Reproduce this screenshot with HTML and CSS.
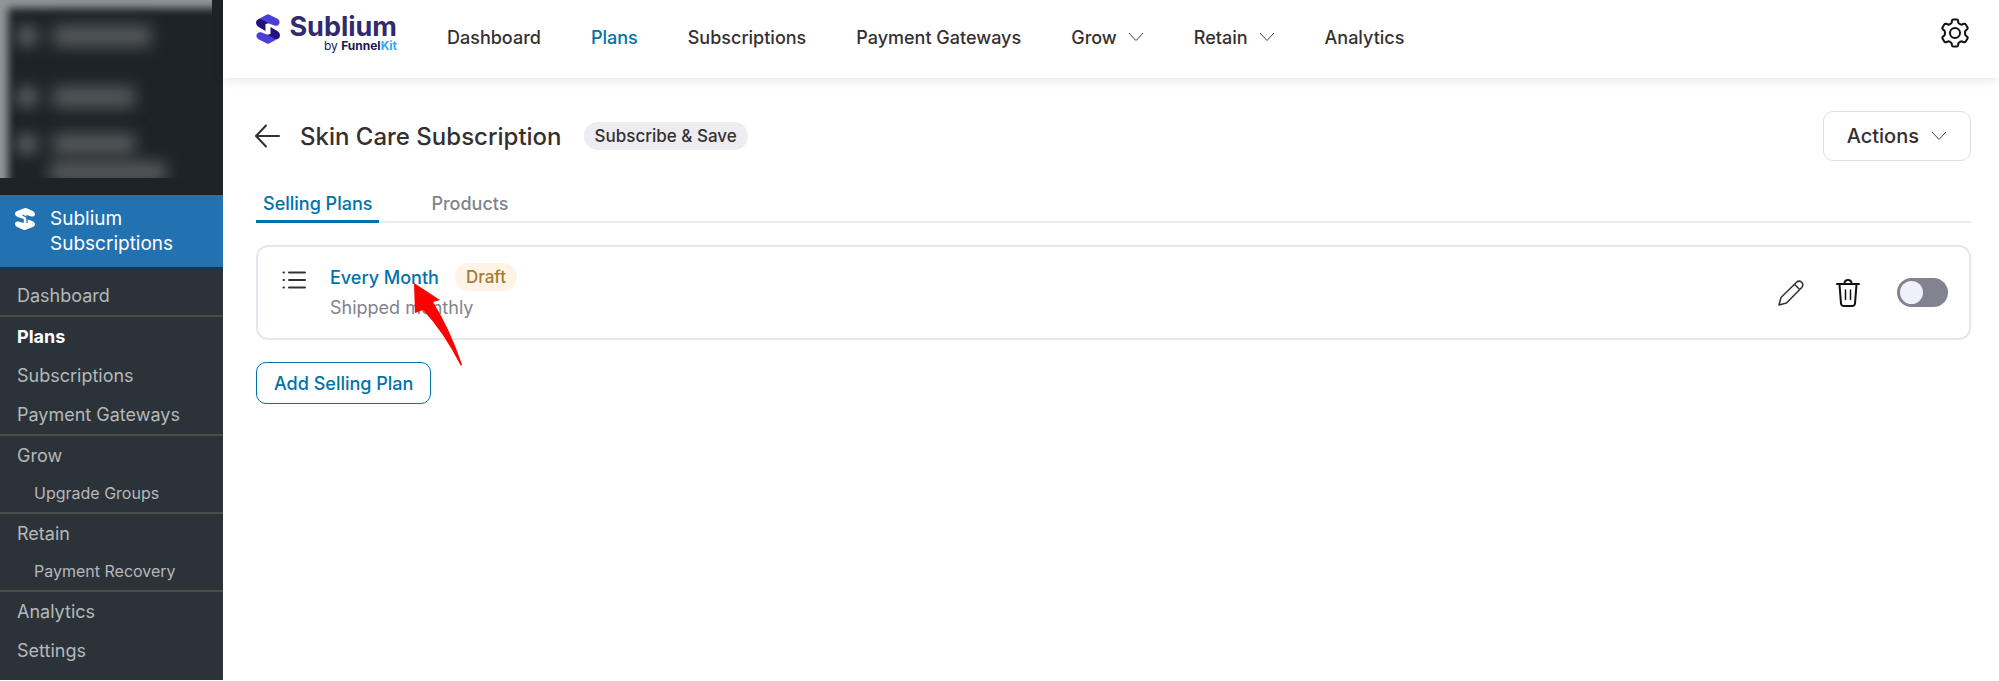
FILE: index.html
```html
<!DOCTYPE html>
<html lang="en">
<head>
    <meta charset="UTF-8">
    <meta name="viewport" content="width=device-width, initial-scale=1.0">
    <title>Sublium Subscriptions</title>
    <link rel="stylesheet" href="styles.css">
</head>
<body>
    <div class="layout">
        <!-- Admin sidebar -->
        <aside class="sidebar">
            <div class="masked" aria-hidden="true">
                <div class="masked-row"><span class="masked-icon"></span><span class="masked-text"></span></div>
                <div class="masked-row near"><span class="masked-icon"></span><span class="masked-text short"></span></div>
                <div class="masked-row tight"><span class="masked-icon"></span><span class="masked-text short"></span></div>
                <div class="masked-row indent"><span class="masked-text wide"></span></div>
            </div>
            <a href="#" class="plugin-link">
                <svg class="plugin-icon" width="20" height="22" viewBox="0 0 24 30" preserveAspectRatio="none">
                    <path fill="#fff" d="M11 .4Q12.500-.3 14 .4L22 4.500Q24 6 24 9Q23.500 12.500 20 11.500L13.500 9.500V16L4 12.500Q0 11 0 7.500Q0 5.500 2 4.500Z"/>
                    <path fill="#fff" d="M13 29.600Q11.500 30.300 10 29.600L2 25.500Q0 24 0 21Q.500 17.500 4 18.500L10.500 20.500V14L20 17.500Q24 19 24 22.500Q24 24.500 22 25.500Z"/>
                    <path d="M9 9.500L14.500 13V20.500" fill="none" stroke="#2271b1" stroke-width="1.500"/>
                </svg>
                <span>Sublium<br>Subscriptions</span>
            </a>
            <nav class="submenu">
                <a href="#">Dashboard</a>
                <a href="#" class="divided current">Plans</a>
                <a href="#">Subscriptions</a>
                <a href="#">Payment Gateways</a>
                <a href="#" class="divided">Grow</a>
                <a href="#" class="child">Upgrade Groups</a>
                <a href="#" class="divided">Retain</a>
                <a href="#" class="child">Payment Recovery</a>
                <a href="#" class="divided">Analytics</a>
                <a href="#">Settings</a>
            </nav>
        </aside>

        <div class="content">
            <header class="topbar">
                <a href="#" class="logo">
                    <svg width="24" height="30" viewBox="0 0 24 30">
                        <path fill="#24107f" d="M2.500 5Q5 4 8 6L14 9L9.500 10V17L3.500 13.500Q0 11.500 0 8.500Q0 6 2.500 5Z"/>
                        <path fill="#4a3fd6" d="M11 .4Q12 0 13 .4L22 5Q24 6.500 23.500 9Q22.500 12.300 19 11.800L13 9.500L5 5Q3.500 4.300 2.500 5Z"/>
                        <path fill="#24107f" d="M21.500 25Q19 26 16 24L10 21L14.500 20V13L20.500 16.500Q24 18.500 24 21.500Q24 24 21.500 25Z"/>
                        <path fill="#4a3fd6" d="M13 29.600Q12 30 11 29.600L2 25Q0 23.500 .500 21Q1.500 17.700 5 18.200L11 20.500L19 25Q20.500 25.700 21.500 25Z"/>
                    </svg>
                    <span class="logo-text">
                        <strong>Sublium</strong>
                        <small>by <b>Funnel<i>Kit</i></b></small>
                    </span>
                </a>
                <nav class="main-nav">
                    <a href="#">Dashboard</a>
                    <a href="#" class="active">Plans</a>
                    <a href="#">Subscriptions</a>
                    <a href="#">Payment Gateways</a>
                    <a href="#">Grow <svg class="chevron" width="16" height="10" viewBox="0 0 16 10"><path d="M1 1L8 8.500L15 1"/></svg></a>
                    <a href="#">Retain <svg class="chevron" width="16" height="10" viewBox="0 0 16 10"><path d="M1 1L8 8.500L15 1"/></svg></a>
                    <a href="#">Analytics</a>
                </nav>
                <button class="icon-button settings" aria-label="Settings">
                    <svg width="28" height="30" viewBox="0 0 28 30" fill="none" stroke="#111" stroke-width="2" stroke-linejoin="round">
                        <path d="M11 2.500Q11.200 1.500 12.200 1.500H15.800Q16.800 1.500 17 2.500L17.300 4.500Q17.500 5.300 18.300 5.700L19.500 6.400Q20.200 6.800 21 6.500L23 5.800Q24 5.500 24.600 6.300L26.500 9.600Q27 10.500 26.200 11.200L24.700 12.500Q24.100 13.100 24.100 14V16Q24.100 16.900 24.700 17.500L26.200 18.800Q27 19.500 26.500 20.400L24.600 23.700Q24 24.500 23 24.200L21 23.500Q20.200 23.200 19.500 23.600L18.300 24.300Q17.500 24.700 17.300 25.500L17 27.500Q16.800 28.500 15.800 28.500H12.200Q11.200 28.500 11 27.500L10.700 25.500Q10.500 24.700 9.700 24.300L8.500 23.600Q7.800 23.200 7 23.500L5 24.200Q4 24.500 3.400 23.700L1.500 20.400Q1 19.500 1.800 18.800L3.300 17.500Q3.900 16.900 3.900 16V14Q3.900 13.100 3.300 12.500L1.800 11.200Q1 10.500 1.500 9.600L3.400 6.300Q4 5.500 5 5.800L7 6.500Q7.800 6.800 8.500 6.400L9.700 5.700Q10.500 5.300 10.700 4.500Z"/>
                        <circle cx="14" cy="15" r="5"/>
                    </svg>
                </button>
            </header>

            <main>
                <div class="page-head">
                    <a href="#" class="back" aria-label="Back">
                        <svg width="25" height="24" viewBox="0 0 25 24" fill="none" stroke="#353030" stroke-width="2" stroke-linecap="round" stroke-linejoin="round">
                            <path d="M24 12H1M11 1.500L1 12L11 22.500"/>
                        </svg>
                    </a>
                    <h1>Skin Care Subscription</h1>
                    <span class="badge type">Subscribe &amp; Save</span>
                    <button class="actions">Actions <svg class="chevron" width="16" height="10" viewBox="0 0 16 10"><path d="M1 1L8 8.500L15 1"/></svg></button>
                </div>

                <div class="tabs">
                    <a href="#" class="active">Selling Plans</a>
                    <a href="#">Products</a>
                </div>

                <!-- Selling plan row -->
                <section class="plan">
                    <svg class="handle" width="24" height="18" viewBox="0 0 24 18" stroke="#353030" stroke-width="2" stroke-linecap="round">
                        <path d="M7 1.500H23M7 9H23M7 16.500H23M1.500 1.500H2M1.500 9H2M1.500 16.500H2"/>
                    </svg>
                    <div class="plan-info">
                        <div class="plan-title">
                            <a href="#">Every Month</a>
                            <span class="badge draft">Draft</span>
                        </div>
                        <p>Shipped monthly</p>
                        <svg class="pointer" width="52" height="84" viewBox="0 0 52 84">
                            <path fill="#f00" d="M1 0L27 17L20 19Q36 44 49 81.500L48 83Q30 48 10 27L2 30Z"/>
                        </svg>
                    </div>
                    <div class="plan-actions">
                        <button class="icon-button" aria-label="Edit">
                            <svg width="26" height="26" viewBox="0 0 26 26" fill="none" stroke="#353030" stroke-width="1.500" stroke-linejoin="round">
                                <path d="M1 25L3 17.500L18.500 2.300Q21 0 23.700 2.300Q26 5 23.700 7.500L8.500 23ZM16.500 4.300L21.700 9.500"/>
                            </svg>
                        </button>
                        <button class="icon-button" aria-label="Delete">
                            <svg width="24" height="30" viewBox="0 0 24 30" fill="none" stroke="#111" stroke-width="2" stroke-linejoin="round" stroke-linecap="round">
                                <path d="M1 6H23M8.500 5.500Q8.500 2 12 2T15.500 5.500M3.500 6.500L5 25.500Q5.300 28 8 28H16Q18.700 28 19 25.500L20.500 6.500"/>
                                <path stroke-width="1.500" d="M9.500 12V21.500M14.500 12V21.500"/>
                            </svg>
                        </button>
                        <input type="checkbox" class="switch" aria-label="Enable Every Month">
                    </div>
                </section>

                <button class="add-plan">Add Selling Plan</button>
            </main>
        </div>
    </div>
</body>
</html>
```

FILE: styles.css
```css
* { box-sizing: border-box; }
body { margin: 0; font-family: Inter, "Liberation Sans", sans-serif; font-size: 18px; color: #353030; background: #fff; }
a { color: inherit; text-decoration: none; }
button { font-family: inherit; color: inherit; background: #fff; cursor: pointer; }
svg { display: block; flex: none; }

.layout { display: flex; align-items: flex-start; }

/* Sidebar */
.sidebar { width: 223px; flex: none; background: #1d2327; }
.masked { height: 178px; margin: 0 11px 17px 0; padding-top: 26px; overflow: hidden; box-shadow: inset 8px 8px 8px #94999c; }
.masked-row { display: flex; gap: 16px; height: 61px; padding-left: 17px; filter: blur(8px); }
.masked-row.near { height: 47px; }
.masked-row.tight { height: 28px; }
.masked-row.indent { padding-left: 50px; }
.masked-icon { width: 20px; height: 20px; border-radius: 10px; background: #667075; }
.masked-text { width: 98px; height: 20px; background: #585c5f; }
.masked-text.short { width: 82px; }
.masked-text.wide { width: 116px; }
.plugin-link { display: flex; gap: 15px; padding: 11px 15px; background: #2271b1; color: #fff; font-size: 19px; line-height: 25px; }
.plugin-icon { margin-top: 2px; }
.submenu { padding: 9px 0 10px; background: #2c3338; color: #b4b8bb; }
.submenu a { display: block; padding-left: 17px; line-height: 39px; }
.submenu .divided { border-top: 2px solid #484d51; }
.submenu .current { color: #fff; font-weight: 700; }
.submenu .child { padding-left: 34px; font-size: 16px; line-height: 37px; }

/* Top bar */
.content { flex: 1; min-width: 0; }
.topbar { display: flex; align-items: center; height: 78px; padding: 0 30px 4px 33px; box-shadow: 0 1px 12px rgba(0, 0, 0, 0.12); }
.logo { display: flex; gap: 8px; margin-top: -8px; }
.logo-text { display: flex; flex-direction: column; align-items: flex-end; width: 109px; }
.logo strong { font-size: 27px; line-height: 26px; color: #312b6b; }
.logo small { font-size: 12px; line-height: 12px; color: #1c1850; }
.logo i { font-style: normal; color: #35a5f5; }
.main-nav { display: flex; gap: 50px; margin-left: 50px; font-weight: 500; }
.main-nav a { display: flex; align-items: center; gap: 11px; }
.main-nav .active { color: #0073aa; }
.chevron { fill: none; stroke: #444; stroke-width: 1; }
.icon-button { padding: 0; border: 0; background: none; }
.settings { margin-left: auto; margin-top: -8px; }

/* Page */
main { padding: 33px 28px 0 32px; }
.page-head { display: flex; align-items: center; }
.page-head h1 { margin: 0 22px 0 20px; font-size: 24px; font-weight: 500; }
.badge { padding: 0 11px; border-radius: 14px; font-size: 17px; font-weight: 500; line-height: 28px; }
.badge.type { background: #ededf1; }
.badge.draft { background: #fef4e6; color: #a37b33; }
.actions { display: flex; align-items: center; gap: 12px; height: 50px; margin-left: auto; padding: 0 23px; border: 1px solid #dedeea; border-radius: 10px; font-size: 20px; font-weight: 500; }
.tabs { display: flex; gap: 45px; margin: 26px 0 0 1px; border-bottom: 2px solid #ebebf0; font-weight: 500; color: #82838e; }
.tabs a { margin-bottom: -2px; padding: 0 7px; border-bottom: 3px solid transparent; line-height: 33px; }
.tabs .active { border-color: #0073aa; color: #0073aa; }
.plan { display: flex; align-items: center; margin: 22px 0 0 1px; padding: 16px 21px 16px 24px; border: 2px solid #e6e6f0; border-radius: 12px; }
.handle { align-self: flex-start; margin-top: 8px; }
.plan-info { position: relative; margin-left: 24px; }
.plan-title { display: flex; align-items: center; gap: 16px; font-weight: 500; }
.plan-title a { color: #0073aa; }
.plan-info p { margin: 3px 0 0; line-height: 28px; color: #82838e; }
.pointer { position: absolute; left: 83px; top: 20px; }
.plan-actions { display: flex; align-items: center; gap: 32px; margin-left: auto; }
.switch { position: relative; width: 51px; height: 29px; margin: 0 0 0 5px; border-radius: 15px; background: #82838e; appearance: none; cursor: pointer; }
.switch::before { content: ""; position: absolute; left: 3px; top: 3px; width: 23px; height: 23px; border-radius: 50%; background: #f0f0fa; }
.switch:checked { background: #0073aa; }
.switch:checked::before { left: 25px; }
.add-plan { height: 42px; margin: 22px 0 0 1px; padding: 0 17px; border: 1px solid #0073aa; border-radius: 10px; font-size: 18px; font-weight: 500; color: #0073aa; }
```
